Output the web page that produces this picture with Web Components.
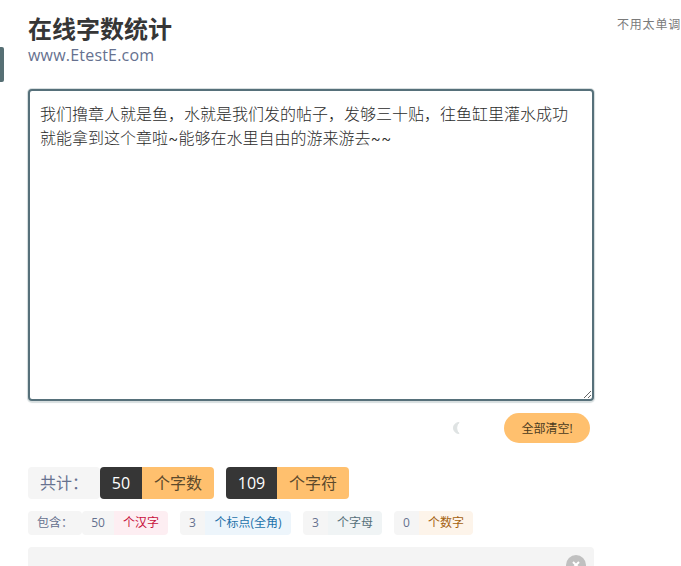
<!DOCTYPE html>
<html lang="zh">
<head>
<meta charset="utf-8">
<title>在线字数统计</title>
<style>
  html, body { margin: 0; height: 566px; overflow: hidden; background: #fff; }
  body { font-family: "Open Sans", "Noto Sans CJK SC", sans-serif; color: #363636; }
</style>
</head>
<body>
<count-page>
  <page-title slot="head" title="在线字数统计" sub="www.EtestE.com"></page-title>
  <text-box slot="input">我们撸章人就是鱼，水就是我们发的帖子，发够三十贴，往鱼缸里灌水成功就能拿到这个章啦~能够在水里自由的游来游去~~</text-box>
  <action-row slot="input"></action-row>
  <div slot="stats">
    <big-tags></big-tags>
    <small-tags></small-tags>
    <note-box></note-box>
  </div>
</count-page>

<script>
class CountPage extends HTMLElement {
  constructor() {
    super()
    this.attachShadow({ mode: 'open' }).innerHTML = `
      <style>
        :host { display: flex; align-items: flex-start; width: 681px; height: 566px; overflow: hidden; position: relative; }
        .tab { position: absolute; left: 0; top: 47px; width: 4px; height: 35px; background: #566f74; border-radius: 0 2px 2px 0; }
        main { flex: 0 0 566px; margin-left: 28px; padding-top: 14px; }
        aside { flex: none; margin-left: 23px; padding-top: 16px; font-size: 12px; line-height: 18px; letter-spacing: 0.8px; color: #7a7a7a; white-space: nowrap; }
      </style>
      <div class="tab"></div>
      <main>
        <slot name="head"></slot>
        <slot name="input"></slot>
        <slot name="stats"></slot>
      </main>
      <aside>不用太单调</aside>
    `
  }
}

class PageTitle extends HTMLElement {
  connectedCallback() {
    this.attachShadow({ mode: 'open' }).innerHTML = `
      <style>
        :host { display: block; height: 75px; }
        h1 { margin: 0; font-size: 24px; line-height: 30px; font-weight: 700; color: #363636; }
        p { margin: 0; font-size: 16px; line-height: 22px; letter-spacing: 0.2px; color: #66718f; }
      </style>
      <h1>${this.getAttribute('title')}</h1>
      <p>${this.getAttribute('sub')}</p>
    `
  }
}

class TextBox extends HTMLElement {
  connectedCallback() {
    const text = this.textContent
    this.attachShadow({ mode: 'open' }).innerHTML = `
      <style>
        :host { display: block; height: 312px; }
        textarea {
          display: block; box-sizing: border-box; width: 100%; height: 100%; margin: 0;
          padding: 11px 10px; border: 2px solid #56707a; border-radius: 4px; outline: none;
          box-shadow: 0 0 0 1px #d7dedf, 0 1px 1px 1px #d7dedf;
          font: 300 16px/24px Inter, "Noto Sans CJK SC", sans-serif; color: #2b2b2b;
          background: #fff; resize: vertical;
        }
      </style>
      <textarea></textarea>
    `
    this.shadowRoot.querySelector('textarea').value = text
  }
}

class ActionRow extends HTMLElement {
  constructor() {
    super()
    this.attachShadow({ mode: 'open' }).innerHTML = `
      <style>
        :host { display: flex; justify-content: flex-end; align-items: center; gap: 44px; height: 30px; margin-top: 12px; padding-right: 4px; }
        svg { display: block; }
        button {
          width: 86px; height: 30px; padding: 0; border: 0; border-radius: 15px; background: #ffc06e;
          font: 12px "Open Sans", "Noto Sans CJK SC", sans-serif; color: #4a3a20;
        }
      </style>
      <svg width="8" height="12" viewBox="0 0 8 12"><path d="M7 .5 A5.5 5.5 0 0 0 7 11.5 A7.5 7.5 0 0 1 7 .5 Z" fill="#dfe3e3" stroke="#dfe3e3" stroke-width="1" stroke-linejoin="round"/></svg>
      <button>全部清空!</button>
    `
  }
}

class BigTags extends HTMLElement {
  constructor() {
    super()
    this.attachShadow({ mode: 'open' }).innerHTML = `
      <style>
        :host { display: flex; height: 32px; margin-top: 24px; font-size: 16px; line-height: 32px; }
        span { display: block; text-align: center; }
        .label { width: 72px; background: #f5f5f5; color: #66718f; border-radius: 4px; }
        .num { background: #363636; color: #fff; font-weight: 500; }
        .unit { width: 72px; background: #ffc06e; color: #5c4a2c; border-radius: 0 4px 4px 0; }
        .n1 { width: 42px; border-radius: 4px 0 0 4px; }
        .n2 { width: 51px; margin-left: 12px; border-radius: 4px 0 0 4px; }
      </style>
      <span class="label">共计：</span>
      <span class="num n1">50</span><span class="unit">个字数</span>
      <span class="num n2">109</span><span class="unit">个字符</span>
    `
  }
}

class SmallTags extends HTMLElement {
  constructor() {
    super()
    const items = [
      [32, '50', 54, '个汉字', '#fdeef2', '#c8103c'],
      [25, '3', 86, '个标点(全角)', '#edf5fb', '#1d72aa'],
      [25, '3', 54, '个字母', '#f0f4f5', '#56707a'],
      [25, '0', 54, '个数字', '#fdf4ea', '#a5610f']
    ]
    const tags = items.map(([w1, n, w2, t, bg, fg]) => `
      <div class="tag">
        <span class="n" style="width:${w1}px">${n}</span><span class="t" style="width:${w2}px;background:${bg};color:${fg}">${t}</span>
      </div>`).join('')
    this.attachShadow({ mode: 'open' }).innerHTML = `
      <style>
        :host { display: flex; gap: 12px; height: 24px; margin-top: 12px; font-size: 12px; line-height: 24px; }
        .lead { display: flex; }
        .tag { display: flex; border-radius: 4px; overflow: hidden; }
        span { display: block; text-align: center; }
        .label { width: 54px; background: #f5f5f5; color: #66718f; border-radius: 4px; }
        .n { background: #f5f5f5; color: #66718f; }
      </style>
      <div class="lead">
        <span class="label">包含：</span>
        ${tags.split('</div>')[0]}</div>
      </div>
      ${tags.split('</div>').slice(1).join('</div>')}
    `
  }
}

class NoteBox extends HTMLElement {
  constructor() {
    super()
    this.attachShadow({ mode: 'open' }).innerHTML = `
      <style>
        :host { display: block; box-sizing: border-box; height: 80px; margin-top: 12px; padding: 8px; background: #f4f4f4; border-radius: 4px; }
        svg { display: block; margin-left: auto; }
      </style>
      <svg width="20" height="20" viewBox="0 0 20 20">
        <circle cx="10" cy="10" r="10" fill="#c0c0c0"/>
        <path d="M7 7 L13 13 M13 7 L7 13" stroke="#fff" stroke-width="2"/>
      </svg>
    `
  }
}

customElements.define('count-page', CountPage)
customElements.define('page-title', PageTitle)
customElements.define('text-box', TextBox)
customElements.define('action-row', ActionRow)
customElements.define('big-tags', BigTags)
customElements.define('small-tags', SmallTags)
customElements.define('note-box', NoteBox)
</script>
</body>
</html>
